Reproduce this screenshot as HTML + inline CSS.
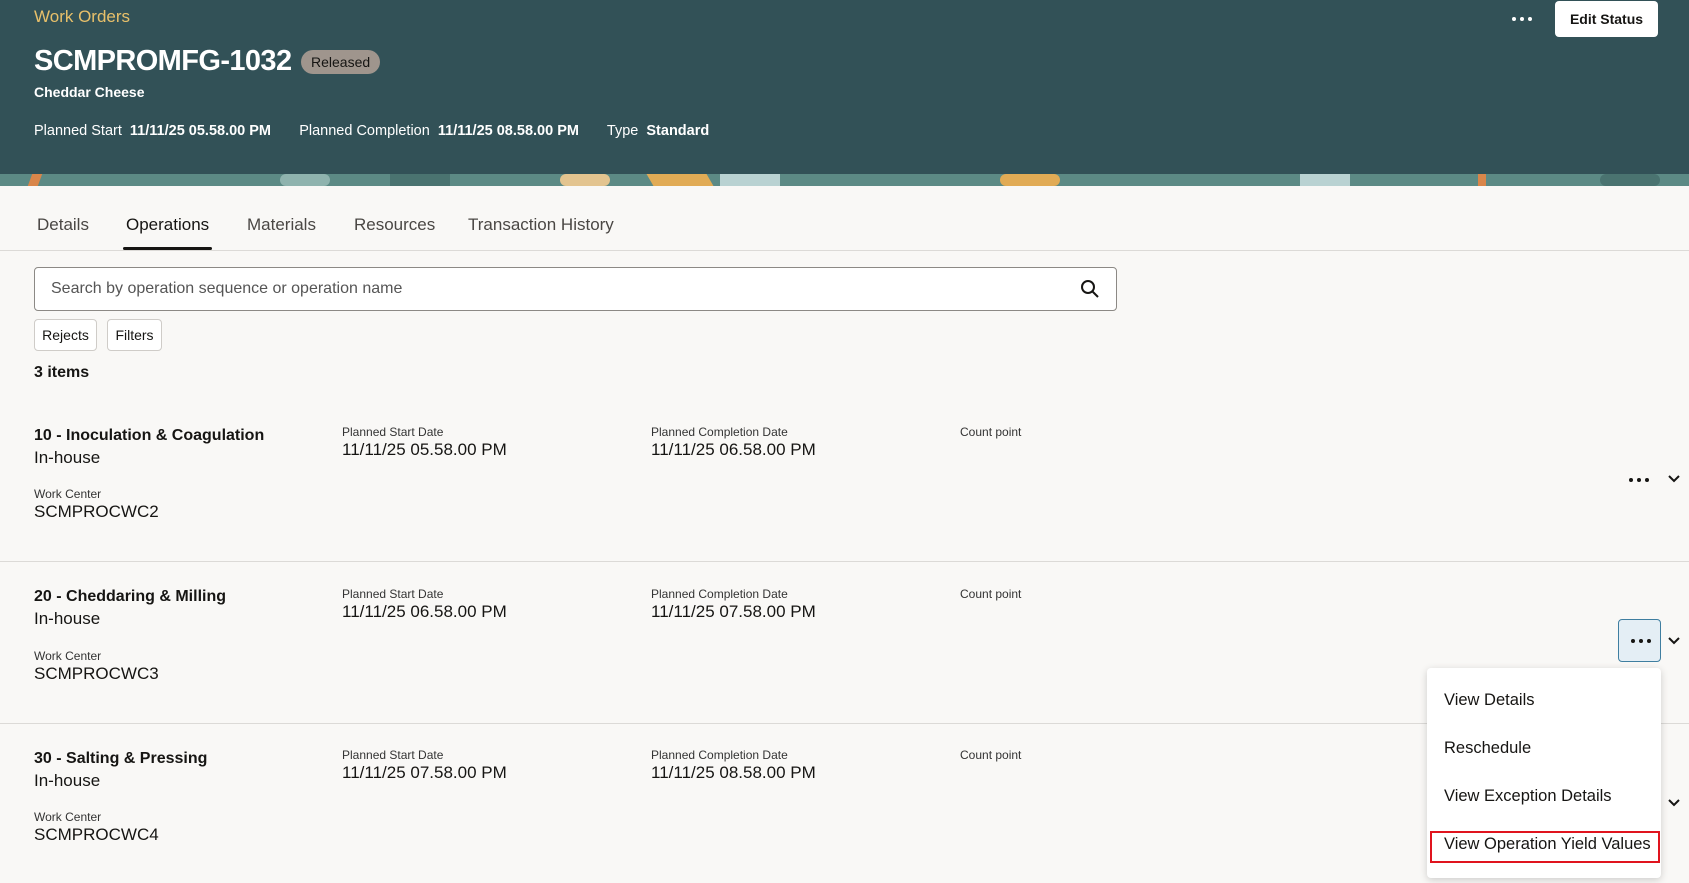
<!DOCTYPE html>
<html><head><meta charset="utf-8"><style>
*{margin:0;padding:0;box-sizing:border-box}
body{width:1689px;height:883px;overflow:hidden;background:#f9f8f6;font-family:"Liberation Sans",sans-serif;color:#161513;position:relative}
.a{position:absolute;white-space:nowrap}
.hdr{position:absolute;left:0;top:0;width:1689px;height:174px;background:#325157}
.pat{position:absolute;left:0;top:174px;width:1689px;height:12px;background:#5c8a85;overflow:hidden}
.lbl{font-size:12px;color:#333}
.val{font-size:17px}
.dt{position:absolute;display:flex;gap:4px}
.dt i{display:block;width:4px;height:4px;border-radius:50%;background:#161513}
</style></head><body>
<div class="hdr"></div>
<div class="pat">
<div class="a" style="left:30px;top:0;width:10px;height:12px;background:#d9864a;transform:skewX(-20deg)"></div>
<div class="a" style="left:280px;top:0;width:50px;height:12px;background:#8fb3ae;border-radius:6px"></div>
<div class="a" style="left:390px;top:0;width:60px;height:12px;background:#4a7370"></div>
<div class="a" style="left:560px;top:0;width:50px;height:12px;background:#e3c48f;border-radius:8px"></div>
<div class="a" style="left:650px;top:0;width:60px;height:12px;background:#e1ab55;transform:skewX(30deg)"></div>
<div class="a" style="left:720px;top:0;width:60px;height:12px;background:#b9d2d2"></div>
<div class="a" style="left:1000px;top:0;width:60px;height:12px;background:#e1ab55;border-radius:8px"></div>
<div class="a" style="left:1300px;top:0;width:50px;height:12px;background:#b9d2d2"></div>
<div class="a" style="left:1478px;top:0;width:8px;height:12px;background:#d9864a"></div>
<div class="a" style="left:1600px;top:0;width:60px;height:12px;background:#4a7370;border-radius:8px"></div>
</div>
<div class="a" style="left:34px;top:7px;font-size:17px;color:#e8c06a">Work Orders</div>
<div class="a" style="left:34px;top:45px;font-size:29px;font-weight:bold;color:#fff;letter-spacing:-0.6px">SCMPROMFG-1032</div>
<div class="a" style="left:301px;top:50px;height:24px;padding:0 10px;background:#9f958d;border-radius:12px;font-size:14px;line-height:24px;color:#161513">Released</div>
<div class="a" style="left:34px;top:84px;font-size:14px;font-weight:bold;color:#fff">Cheddar Cheese</div>
<div class="a" style="left:34px;top:123px;font-size:14.5px;color:#fff">Planned Start&nbsp; <b>11/11/25 05.58.00 PM</b> &nbsp;&nbsp;&nbsp;&nbsp;&nbsp; Planned Completion&nbsp; <b>11/11/25 08.58.00 PM</b> &nbsp;&nbsp;&nbsp;&nbsp;&nbsp; Type&nbsp; <b>Standard</b></div>
<div class="dt" style="left:1512px;top:17px"><i style="background:#fff"></i><i style="background:#fff"></i><i style="background:#fff"></i></div>
<div class="a" style="left:1555px;top:1px;width:103px;height:36px;background:#fff;border-radius:4px;font-size:14px;font-weight:bold;line-height:36px;text-align:center">Edit Status</div>

<div class="a" style="left:37px;top:215px;font-size:17px;color:#4a4744">Details</div>
<div class="a" style="left:126px;top:215px;font-size:17px;color:#161513">Operations</div>
<div class="a" style="left:247px;top:215px;font-size:17px;color:#4a4744">Materials</div>
<div class="a" style="left:354px;top:215px;font-size:17px;color:#4a4744">Resources</div>
<div class="a" style="left:468px;top:215px;font-size:17px;color:#4a4744">Transaction History</div>
<div class="a" style="left:0;top:250px;width:1689px;height:1px;background:#dcdad7"></div>
<div class="a" style="left:123px;top:247px;width:89px;height:3px;background:#161513;border-radius:2px"></div>

<div class="a" style="left:34px;top:267px;width:1083px;height:44px;border:1px solid #8c8985;border-radius:4px;background:#fff"></div>
<div class="a" style="left:51px;top:280px;font-size:16px;color:#555">Search by operation sequence or operation name</div>
<svg class="a" style="left:1080px;top:279px" width="20" height="20" viewBox="0 0 20 20"><circle cx="8" cy="8" r="6" fill="none" stroke="#161513" stroke-width="2"/><path d="M12.5 12.5L18 18" stroke="#161513" stroke-width="2"/></svg>
<div class="a" style="left:34px;top:319px;width:63px;height:32px;border:1px solid #cfccc8;border-radius:4px;background:#fff;font-size:14px;line-height:30px;text-align:center">Rejects</div>
<div class="a" style="left:107px;top:319px;width:55px;height:32px;border:1px solid #cfccc8;border-radius:4px;background:#fff;font-size:14px;line-height:30px;text-align:center">Filters</div>
<div class="a" style="left:34px;top:364px;font-size:16px;font-weight:bold">3 items</div>

<div class="a" style="left:34px;top:427px;font-size:16px;font-weight:bold">10 - Inoculation &amp; Coagulation</div>
<div class="a" style="left:34px;top:448px;font-size:17px">In-house</div>
<div class="a lbl" style="left:34px;top:487px">Work Center</div>
<div class="a val" style="left:34px;top:502px">SCMPROCWC2</div>
<div class="a lbl" style="left:342px;top:425px">Planned Start Date</div>
<div class="a val" style="left:342px;top:440px">11/11/25 05.58.00 PM</div>
<div class="a lbl" style="left:651px;top:425px">Planned Completion Date</div>
<div class="a val" style="left:651px;top:440px">11/11/25 06.58.00 PM</div>
<div class="a lbl" style="left:960px;top:425px">Count point</div>
<div class="dt" style="left:1629px;top:478px"><i></i><i></i><i></i></div>
<svg class="a" style="left:1667px;top:474px" width="14" height="10"><path d="M2 2l5 5 5-5" fill="none" stroke="#161513" stroke-width="2"/></svg>
<div class="a" style="left:0;top:561px;width:1689px;height:1px;background:#dcdad7"></div>

<div class="a" style="left:34px;top:588px;font-size:16px;font-weight:bold">20 - Cheddaring &amp; Milling</div>
<div class="a" style="left:34px;top:609px;font-size:17px">In-house</div>
<div class="a lbl" style="left:34px;top:649px">Work Center</div>
<div class="a val" style="left:34px;top:664px">SCMPROCWC3</div>
<div class="a lbl" style="left:342px;top:587px">Planned Start Date</div>
<div class="a val" style="left:342px;top:602px">11/11/25 06.58.00 PM</div>
<div class="a lbl" style="left:651px;top:587px">Planned Completion Date</div>
<div class="a val" style="left:651px;top:602px">11/11/25 07.58.00 PM</div>
<div class="a lbl" style="left:960px;top:587px">Count point</div>
<div class="a" style="left:1618px;top:619px;width:43px;height:43px;border:1px solid #3f7ea0;border-radius:4px;background:#e4eef5"></div>
<div class="dt" style="left:1631px;top:639px"><i></i><i></i><i></i></div>
<svg class="a" style="left:1667px;top:636px" width="14" height="10"><path d="M2 2l5 5 5-5" fill="none" stroke="#161513" stroke-width="2"/></svg>
<div class="a" style="left:0;top:723px;width:1689px;height:1px;background:#dcdad7"></div>

<div class="a" style="left:34px;top:750px;font-size:16px;font-weight:bold">30 - Salting &amp; Pressing</div>
<div class="a" style="left:34px;top:771px;font-size:17px">In-house</div>
<div class="a lbl" style="left:34px;top:810px">Work Center</div>
<div class="a val" style="left:34px;top:825px">SCMPROCWC4</div>
<div class="a lbl" style="left:342px;top:748px">Planned Start Date</div>
<div class="a val" style="left:342px;top:763px">11/11/25 07.58.00 PM</div>
<div class="a lbl" style="left:651px;top:748px">Planned Completion Date</div>
<div class="a val" style="left:651px;top:763px">11/11/25 08.58.00 PM</div>
<div class="a lbl" style="left:960px;top:748px">Count point</div>
<svg class="a" style="left:1667px;top:798px" width="14" height="10"><path d="M2 2l5 5 5-5" fill="none" stroke="#161513" stroke-width="2"/></svg>

<div class="a" style="left:1427px;top:668px;width:234px;height:210px;background:#fff;border-radius:4px;box-shadow:0 2px 8px rgba(0,0,0,.18)"></div>
<div class="a" style="left:1444px;top:691px;font-size:16.5px">View Details</div>
<div class="a" style="left:1444px;top:739px;font-size:16.5px">Reschedule</div>
<div class="a" style="left:1444px;top:787px;font-size:16.5px">View Exception Details</div>
<div class="a" style="left:1430px;top:831px;width:230px;height:32px;border:2px solid #e0141e"></div>
<div class="a" style="left:1444px;top:835px;font-size:16.5px">View Operation Yield Values</div>
</body></html>
